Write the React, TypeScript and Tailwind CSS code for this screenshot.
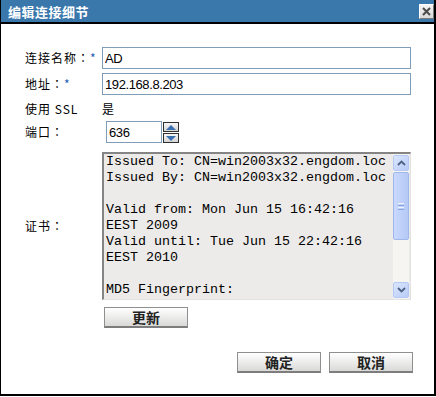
const certText = `Issued To: CN=win2003x32.engdom.loc
Issued By: CN=win2003x32.engdom.loc

Valid from: Mon Jun 15 16:42:16
EEST 2009
Valid until: Tue Jun 15 22:42:16
EEST 2010

MD5 Fingerprint:`

function CloseButton() {
  return (
    <div className="w-[15px] h-[15px] bg-gradient-to-b from-[#f4f4f4] to-[#d8d8d8] border border-t-white border-l-white border-r-[#7a7a7a] border-b-[#7a7a7a] flex items-center justify-center">
      <svg width="11" height="11" viewBox="0 0 11 11">
        <path d="M2 2 L9 9 M9 2 L2 9" stroke="#4a4a4a" strokeWidth="2" />
      </svg>
    </div>
  )
}

function Spinner() {
  return (
    <div className="ml-[1px] flex flex-col gap-[1px] self-end">
      <div className="w-[16px] h-[10px] border border-[#2f2f2f] bg-gradient-to-b from-[#f6f6f6] to-[#d4d4d4] flex items-center justify-center">
        <svg width="12" height="7" viewBox="0 0 12 7">
          <path d="M1 6 L6 1 L11 6 Z" fill="#3b6fb0" />
        </svg>
      </div>
      <div className="w-[16px] h-[10px] border border-[#2f2f2f] bg-gradient-to-b from-[#f6f6f6] to-[#d4d4d4] flex items-center justify-center">
        <svg width="12" height="7" viewBox="0 0 12 7">
          <path d="M1 1 L6 6 L11 1 Z" fill="#3b6fb0" />
        </svg>
      </div>
    </div>
  )
}

function ScrollButton({ up }: { up?: boolean }) {
  return (
    <div className="w-[16px] h-[16px] rounded-[2px] border border-[#b4c8f4] bg-gradient-to-br from-[#dbe6fe] to-[#b8cbf6] flex items-center justify-center">
      <svg width="9" height="6" viewBox="0 0 9 6">
        <path d={up ? "M1 5 L4.5 1.5 L8 5" : "M1 1 L4.5 4.5 L8 1"} stroke="#4d6185" strokeWidth="1.8" fill="none" />
      </svg>
    </div>
  )
}

function Scrollbar() {
  return (
    <div className="w-[16px] mr-[1px] py-[1px] flex flex-col bg-[#f6f5f1]">
      <ScrollButton up />
      <div className="mt-[1px] h-[68px] rounded-[2px] border border-[#9fb7ea] bg-gradient-to-r from-[#c9d8fd] to-[#b5c9f6] flex flex-col items-center justify-center gap-[1px]">
        <div className="w-[6px] h-[1px] bg-[#eef3ff]" />
        <div className="w-[6px] h-[1px] bg-[#8ca6df]" />
        <div className="w-[6px] h-[1px] bg-[#eef3ff]" />
        <div className="w-[6px] h-[1px] bg-[#8ca6df]" />
      </div>
      <div className="flex-1" />
      <ScrollButton />
    </div>
  )
}

function Btn({ label }: { label: string }) {
  return (
    <button
      type="button"
      className="w-[84px] h-[21px] border border-[#8f8f8f] border-b-2 border-b-[#7d7d7d] bg-gradient-to-b from-white to-[#d9dad8] text-[14px] font-bold text-[#222] leading-none flex items-center justify-center"
    >
      {label}
    </button>
  )
}

// full-width colon, centred in its cell like the original bitmap font
function Colon() {
  return <span className="font-['Noto_Sans_CJK_JP',sans-serif]">：</span>
}

const inputCls =
  "h-[22px] border border-[#7f9db9] px-[2px] text-[13px] tracking-[-0.4px] text-black font-['Liberation_Sans',Arial,sans-serif] outline-none bg-white"

export default function App() {
  return (
    <div className="w-[436px] h-[397px] bg-white font-['Noto_Sans_CJK_SC',sans-serif] text-black">
      <div className="w-[436px] h-[396px] border-l border-r-2 border-b-2 border-black flex flex-col">
        <div className="h-[24px] bg-[#3a77ab] border-b-2 border-black flex items-center justify-between pl-[7px]">
          <span className="text-white font-bold text-[13px] tracking-[0.5px] leading-none">编辑连接细节</span>
          <CloseButton />
        </div>

        <div className="flex-1 flex flex-col pl-[24px] pt-[23px] text-[12px] tracking-[1px]">
          <div className="flex items-center h-[22px]">
            <div className="w-[77px]">
              连接名称<Colon />
              <span className="text-[#1d5fb8]">*</span>
            </div>
            <input readOnly value="AD" className={`${inputCls} w-[309px]`} />
          </div>

          <div className="flex items-center h-[22px] mt-[4px]">
            <div className="w-[77px]">
              地址<Colon />
              <span className="text-[#1d5fb8]">*</span>
            </div>
            <input readOnly value="192.168.8.203" className={`${inputCls} w-[309px]`} />
          </div>

          <div className="flex items-center h-[24px] mt-[2px]">
            <div className="w-[77px]">使用 SSL</div>
            <div>是</div>
          </div>

          <div className="flex items-center h-[22px]">
            <div className="w-[77px]">
              端口<Colon />
            </div>
            <input readOnly value="636" className={`${inputCls} w-[56px] ml-[4px]`} />
            <Spinner />
          </div>

          <div className="flex items-center mt-[9px]">
            <div className="w-[77px]">
              证书<Colon />
            </div>
            <div className="w-[309px] h-[148px] flex border-t-2 border-l-2 border-[#858585] border-r border-b border-r-[#e2e2e2] border-b-[#e2e2e2] bg-[#ecebe9]">
              <pre className="flex-1 overflow-hidden pl-[2px] font-['Liberation_Mono','Courier_New',monospace] text-[13.33px] leading-[16px] tracking-normal text-black whitespace-pre">
                {certText}
              </pre>
              <Scrollbar />
            </div>
          </div>

          <div className="flex mt-[7px] pl-[79px] tracking-normal">
            <Btn label="更新" />
          </div>

          <div className="flex justify-end gap-[8px] mt-[24px] pr-[21px] tracking-normal">
            <Btn label="确定" />
            <Btn label="取消" />
          </div>
        </div>
      </div>
    </div>
  )
}
